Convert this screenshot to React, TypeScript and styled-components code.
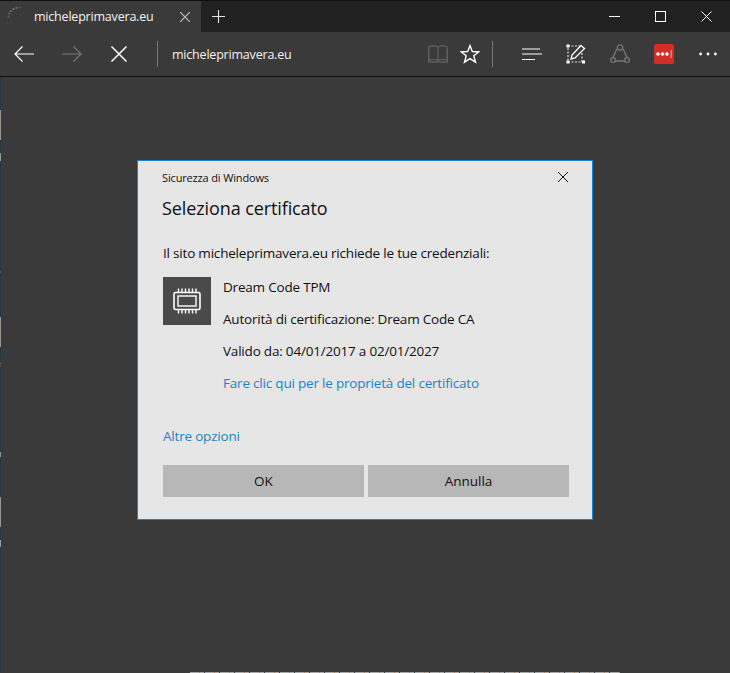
import React, { FC } from "react";
import styled, { createGlobalStyle } from "styled-components";

const GlobalStyle = createGlobalStyle`
  html, body {
    margin: 0;
    padding: 0;
    background: #3a3a3a;
  }
  * {
    box-sizing: border-box;
  }
`;

const edgeMarks = [
  { top: 33, height: 30, color: "#9c978e" },
  { top: 13, height: 8, color: "#7fa793" },
  { top: 110, height: 2, color: "#2f5b9a" },
  { top: 44, height: 30, color: "#9c978e" },
  { top: 15, height: 5, color: "#5b4a45" },
  { top: 85, height: 5, color: "#8a9a8a" },
  { top: 40, height: 30, color: "#9c978e" },
  { top: 13, height: 7, color: "#7fa793" },
];

const App: FC = () => {
  return (
    <Window>
      <GlobalStyle />
      <TabStrip>
        <Tab>
          <Spinner viewBox="0 0 14 12">
            <circle cx="1.5" cy="10.5" r="1.1" fill="#5e5e5e" />
            <circle cx="2.3" cy="7.6" r="1.1" fill="#666" />
            <circle cx="4" cy="5" r="1.1" fill="#6e6e6e" />
            <circle cx="6.6" cy="3" r="1.1" fill="#777" />
            <circle cx="9.6" cy="1.8" r="1.1" fill="#6a6a6a" />
            <circle cx="12.6" cy="1.4" r="1" fill="#555" />
          </Spinner>
          <TabTitle>micheleprimavera.eu</TabTitle>
          <TabClose viewBox="0 0 10 10">
            <path d="M0 0L10 10M10 0L0 10" stroke="#bdbdbd" strokeWidth="1.2" />
          </TabClose>
        </Tab>
        <NewTab viewBox="0 0 13 13">
          <path d="M6.5 0V13M0 6.5H13" stroke="#e4e4e4" strokeWidth="1.1" />
        </NewTab>
        <WindowControls>
          <WindowControl>
            <svg width="11" height="11" viewBox="0 0 11 11">
              <path d="M0 5.5H11" stroke="#fff" strokeWidth="1" />
            </svg>
          </WindowControl>
          <WindowControl>
            <svg width="11" height="11" viewBox="0 0 11 11">
              <rect x="0.5" y="0.5" width="10" height="10" fill="none" stroke="#fff" />
            </svg>
          </WindowControl>
          <WindowControl>
            <svg width="11" height="11" viewBox="0 0 11 11">
              <path d="M0.5 0.5L10.5 10.5M10.5 0.5L0.5 10.5" stroke="#fff" strokeWidth="1" />
            </svg>
          </WindowControl>
        </WindowControls>
      </TabStrip>

      <Toolbar>
        <NavButton $width={48}>
          <svg width="20" height="16" viewBox="0 0 20 16">
            <path d="M20 8H1M8.5 0.5L1 8L8.5 15.5" fill="none" stroke="#fff" strokeWidth="1.2" />
          </svg>
        </NavButton>
        <NavButton $width={47}>
          <svg width="20" height="16" viewBox="0 0 20 16">
            <path d="M0 8H19M11.5 0.5L19 8L11.5 15.5" fill="none" stroke="#777" strokeWidth="1.2" />
          </svg>
        </NavButton>
        <NavButton $width={48}>
          <svg width="16" height="16" viewBox="0 0 16 16">
            <path d="M0.5 0.5L15.5 15.5M15.5 0.5L0.5 15.5" stroke="#fff" strokeWidth="1.5" />
          </svg>
        </NavButton>
        <Separator $left={14} />
        <Address>micheleprimavera.eu</Address>
        <NavButton $width={32}>
          <svg width="20" height="18" viewBox="0 0 20 18">
            <path
              d="M1 1.5C4 0.5 7.5 0.5 10 2C12.5 0.5 16 0.5 19 1.5V15C16 14.2 12.5 14.2 10 15.5C7.5 14.2 4 14.2 1 15ZM10 2V15.5M0.5 4V17H19.5V4"
              fill="none"
              stroke="#5c5c5c"
              strokeWidth="1.3"
            />
          </svg>
        </NavButton>
        <NavButton $width={32}>
          <svg width="20" height="20" viewBox="0 0 20 20">
            <path
              d="M10 1.6L12.3 7.5L18.9 7.8L13.8 11.8L15.5 18.2L10 14.6L4.5 18.2L6.2 11.8L1.1 7.8L7.7 7.5Z"
              fill="none"
              stroke="#fff"
              strokeWidth="1.4"
            />
          </svg>
        </NavButton>
        <Separator $left={6} />
        <NavButton $width={44} $shift={17}>
          <svg width="20" height="13" viewBox="0 0 20 13">
            <path d="M0 1H18M0 6H20M0 11.5H13" stroke="#fff" strokeWidth="1.2" />
          </svg>
        </NavButton>
        <NavButton $width={44}>
          <svg width="20" height="20" viewBox="0 0 20 20">
            <path
              d="M2 2H14M2 4V18H16V8"
              fill="none"
              stroke="#ddd"
              strokeWidth="1.2"
              strokeDasharray="2 1.5"
            />
            <rect x="0.5" y="0.5" width="3" height="3" fill="#fff" />
            <rect x="0.5" y="16.5" width="3" height="3" fill="#fff" />
            <rect x="16" y="16.5" width="3" height="3" fill="#fff" />
            <path d="M5 15L6 11L15 1.5L18.5 4.5L9 14Z" fill="none" stroke="#fff" strokeWidth="1.3" />
          </svg>
        </NavButton>
        <NavButton $width={44}>
          <svg width="20" height="20" viewBox="0 0 20 20">
            <path d="M6.8 5L3 13.5M13.2 5L17 13.5M5 17H15" stroke="#777" strokeWidth="1.3" />
            <circle cx="10" cy="3.5" r="2.7" fill="none" stroke="#777" strokeWidth="1.3" />
            <circle cx="3" cy="16" r="2.4" fill="none" stroke="#777" strokeWidth="1.3" />
            <circle cx="17" cy="16" r="2.4" fill="none" stroke="#777" strokeWidth="1.3" />
          </svg>
        </NavButton>
        <NavButton $width={44}>
          <PasswordBadge>
            <svg width="16" height="8" viewBox="0 0 16 8">
              <circle cx="2" cy="4" r="1.8" fill="#fff" />
              <circle cx="6.5" cy="4" r="1.8" fill="#fff" />
              <circle cx="11" cy="4" r="1.8" fill="#fff" />
              <path d="M15.2 0V8" stroke="#f0c8c6" strokeWidth="0.8" />
            </svg>
          </PasswordBadge>
        </NavButton>
        <NavButton $width={44}>
          <svg width="18" height="4" viewBox="0 0 18 4">
            <circle cx="1.6" cy="2" r="1.4" fill="#fff" />
            <circle cx="9" cy="2" r="1.4" fill="#fff" />
            <circle cx="16.4" cy="2" r="1.4" fill="#fff" />
          </svg>
        </NavButton>
      </Toolbar>

      <Content>
        <EdgeStrip>
          {edgeMarks.map((mark, i) => (
            <EdgeMark key={i} $top={mark.top} $height={mark.height} $color={mark.color} />
          ))}
        </EdgeStrip>
        <Stage>
          <Dialog>
            <DialogHeader>
              <DialogCaption>Sicurezza di Windows</DialogCaption>
              <svg width="10" height="10" viewBox="0 0 10 10">
                <path d="M0 0L10 10M10 0L0 10" stroke="#111" strokeWidth="1" />
              </svg>
            </DialogHeader>
            <DialogTitle>Seleziona certificato</DialogTitle>
            <Message>Il sito micheleprimavera.eu richiede le tue credenziali:</Message>
            <Certificate>
              <CertIcon>
                <svg width="30" height="30" viewBox="0 0 30 30">
                  <rect x="2" y="6.5" width="26" height="17" rx="1.5" fill="none" stroke="#fff" strokeWidth="1.6" />
                  <rect x="6" y="10" width="18" height="10" fill="none" stroke="#fff" strokeWidth="1.4" />
                  <path
                    d="M6.5 2.5V6M10 2.5V6M13.5 2.5V6M17 2.5V6M20.5 2.5V6M24 2.5V6M6.5 24V27.5M10 24V27.5M13.5 24V27.5M17 24V27.5M20.5 24V27.5M24 24V27.5"
                    stroke="#fff"
                    strokeWidth="1.4"
                  />
                </svg>
              </CertIcon>
              <CertDetails>
                <CertLine>Dream Code TPM</CertLine>
                <CertLine>Autorità di certificazione: Dream Code CA</CertLine>
                <CertLine>Valido da: 04/01/2017 a 02/01/2027</CertLine>
                <CertLink>Fare clic qui per le proprietà del certificato</CertLink>
              </CertDetails>
            </Certificate>
            <MoreOptions>Altre opzioni</MoreOptions>
            <ButtonRow>
              <DialogButton>OK</DialogButton>
              <DialogButton>Annulla</DialogButton>
            </ButtonRow>
          </Dialog>
        </Stage>
      </Content>
      <BottomEdge />
    </Window>
  );
};

export default App;

const uiFont = `"Open Sans", "Noto Sans", "Liberation Sans", sans-serif`;

const Window = styled.div`
  width: 730px;
  height: 673px;
  display: flex;
  flex-direction: column;
  border-top: 1px solid #111;
  background: #3a3a3a;
  font-family: ${uiFont};
  overflow: hidden;
`;

const TabStrip = styled.div`
  height: 31px;
  display: flex;
  align-items: center;
  background: #212121;
  flex-shrink: 0;
`;

const Tab = styled.div`
  width: 201px;
  height: 100%;
  display: flex;
  align-items: center;
  background: #3a3a3a;
  padding-left: 7px;
`;

const Spinner = styled.svg`
  width: 14px;
  height: 12px;
  margin-top: -10px;
`;

const TabTitle = styled.span`
  margin-left: 13px;
  width: 146px;
  color: #f2f2f2;
  font-size: 12.5px;
  letter-spacing: -0.2px;
  white-space: nowrap;
`;

const TabClose = styled.svg`
  width: 10px;
  height: 10px;
`;

const NewTab = styled.svg`
  width: 13px;
  height: 13px;
  margin-left: 11px;
`;

const WindowControls = styled.div`
  margin-left: auto;
  display: flex;
  margin-right: 1px;
`;

const WindowControl = styled.div`
  width: 46px;
  height: 31px;
  display: flex;
  align-items: center;
  justify-content: center;
`;

const Toolbar = styled.div`
  height: 44px;
  display: flex;
  align-items: center;
  background: #3a3a3a;
  flex-shrink: 0;
`;

const NavButton = styled.div<{ $width: number; $shift?: number }>`
  width: ${(p) => p.$width}px;
  height: 44px;
  margin-left: ${(p) => p.$shift ?? 0}px;
  display: flex;
  align-items: center;
  justify-content: center;
  flex-shrink: 0;
`;

const Separator = styled.div<{ $left: number }>`
  width: 1px;
  height: 26px;
  margin-left: ${(p) => p.$left}px;
  background: #777;
  flex-shrink: 0;
`;

const Address = styled.div`
  margin-left: 14px;
  width: 250px;
  color: #f2f2f2;
  font-size: 12.5px;
  letter-spacing: -0.2px;
  white-space: nowrap;
`;

const PasswordBadge = styled.div`
  width: 20px;
  height: 20px;
  border-radius: 2px;
  background: #d32d27;
  display: flex;
  align-items: center;
  justify-content: center;
`;

const Content = styled.div`
  flex: 1;
  display: flex;
  border-top: 1px solid #0d0d0d;
  min-height: 0;
`;

const EdgeStrip = styled.div`
  width: 1px;
  display: flex;
  flex-direction: column;
  background: #24384a;
  flex-shrink: 0;
`;

const EdgeMark = styled.div<{ $top: number; $height: number; $color: string }>`
  margin-top: ${(p) => p.$top}px;
  height: ${(p) => p.$height}px;
  background: ${(p) => p.$color};
`;

const Stage = styled.div`
  flex: 1;
  padding: 83px 0 0 136px;
`;

const Dialog = styled.div`
  width: 456px;
  height: 360px;
  background: #e6e6e6;
  border: 1px solid #1883d7;
  padding: 0 24px;
  color: #111;
`;

const DialogHeader = styled.div`
  height: 32px;
  display: flex;
  align-items: center;
  justify-content: space-between;
  padding-right: -1px;
  margin-top: 0;
`;

const DialogCaption = styled.div`
  font-size: 11px;
  letter-spacing: -0.15px;
  margin-top: 1px;
`;

const DialogTitle = styled.h1`
  margin: 0;
  height: 32px;
  line-height: 30px;
  font-size: 18px;
  font-weight: 400;
  letter-spacing: -0.1px;
`;

const Message = styled.p`
  margin: 13px 0 0 1px;
  height: 30px;
  line-height: 30px;
  font-size: 13.5px;
  letter-spacing: -0.2px;
  white-space: nowrap;
`;

const Certificate = styled.div`
  display: flex;
  gap: 12px;
  margin: 9px 0 0 1px;
`;

const CertIcon = styled.div`
  width: 48px;
  height: 48px;
  background: #4a4a4a;
  display: flex;
  align-items: center;
  justify-content: center;
  flex-shrink: 0;
`;

const CertDetails = styled.div`
  display: flex;
  flex-direction: column;
`;

const CertLine = styled.div`
  height: 32px;
  line-height: 20px;
  font-size: 13.5px;
  letter-spacing: -0.2px;
  white-space: nowrap;
`;

const CertLink = styled(CertLine)`
  color: #1a84c7;
`;

const MoreOptions = styled.div`
  margin: 16px 0 0 1px;
  height: 30px;
  line-height: 30px;
  color: #1a84c7;
  font-size: 13.5px;
  letter-spacing: -0.2px;
`;

const ButtonRow = styled.div`
  display: grid;
  grid-template-columns: 201px 201px;
  gap: 4px;
  margin: 14px 0 0 1px;
`;

const DialogButton = styled.button`
  height: 32px;
  border: 0;
  padding: 0;
  background: #b7b7b7;
  color: #111;
  font-family: ${uiFont};
  font-size: 13.5px;
`;

const BottomEdge = styled.div`
  height: 1px;
  flex-shrink: 0;
  margin-left: 190px;
  margin-right: 110px;
  background: repeating-linear-gradient(90deg, #a9a9a9 0 9px, #b5824f 9px 10px, #a9a9a9 10px 14px, #33475b 14px 15px);
`;
